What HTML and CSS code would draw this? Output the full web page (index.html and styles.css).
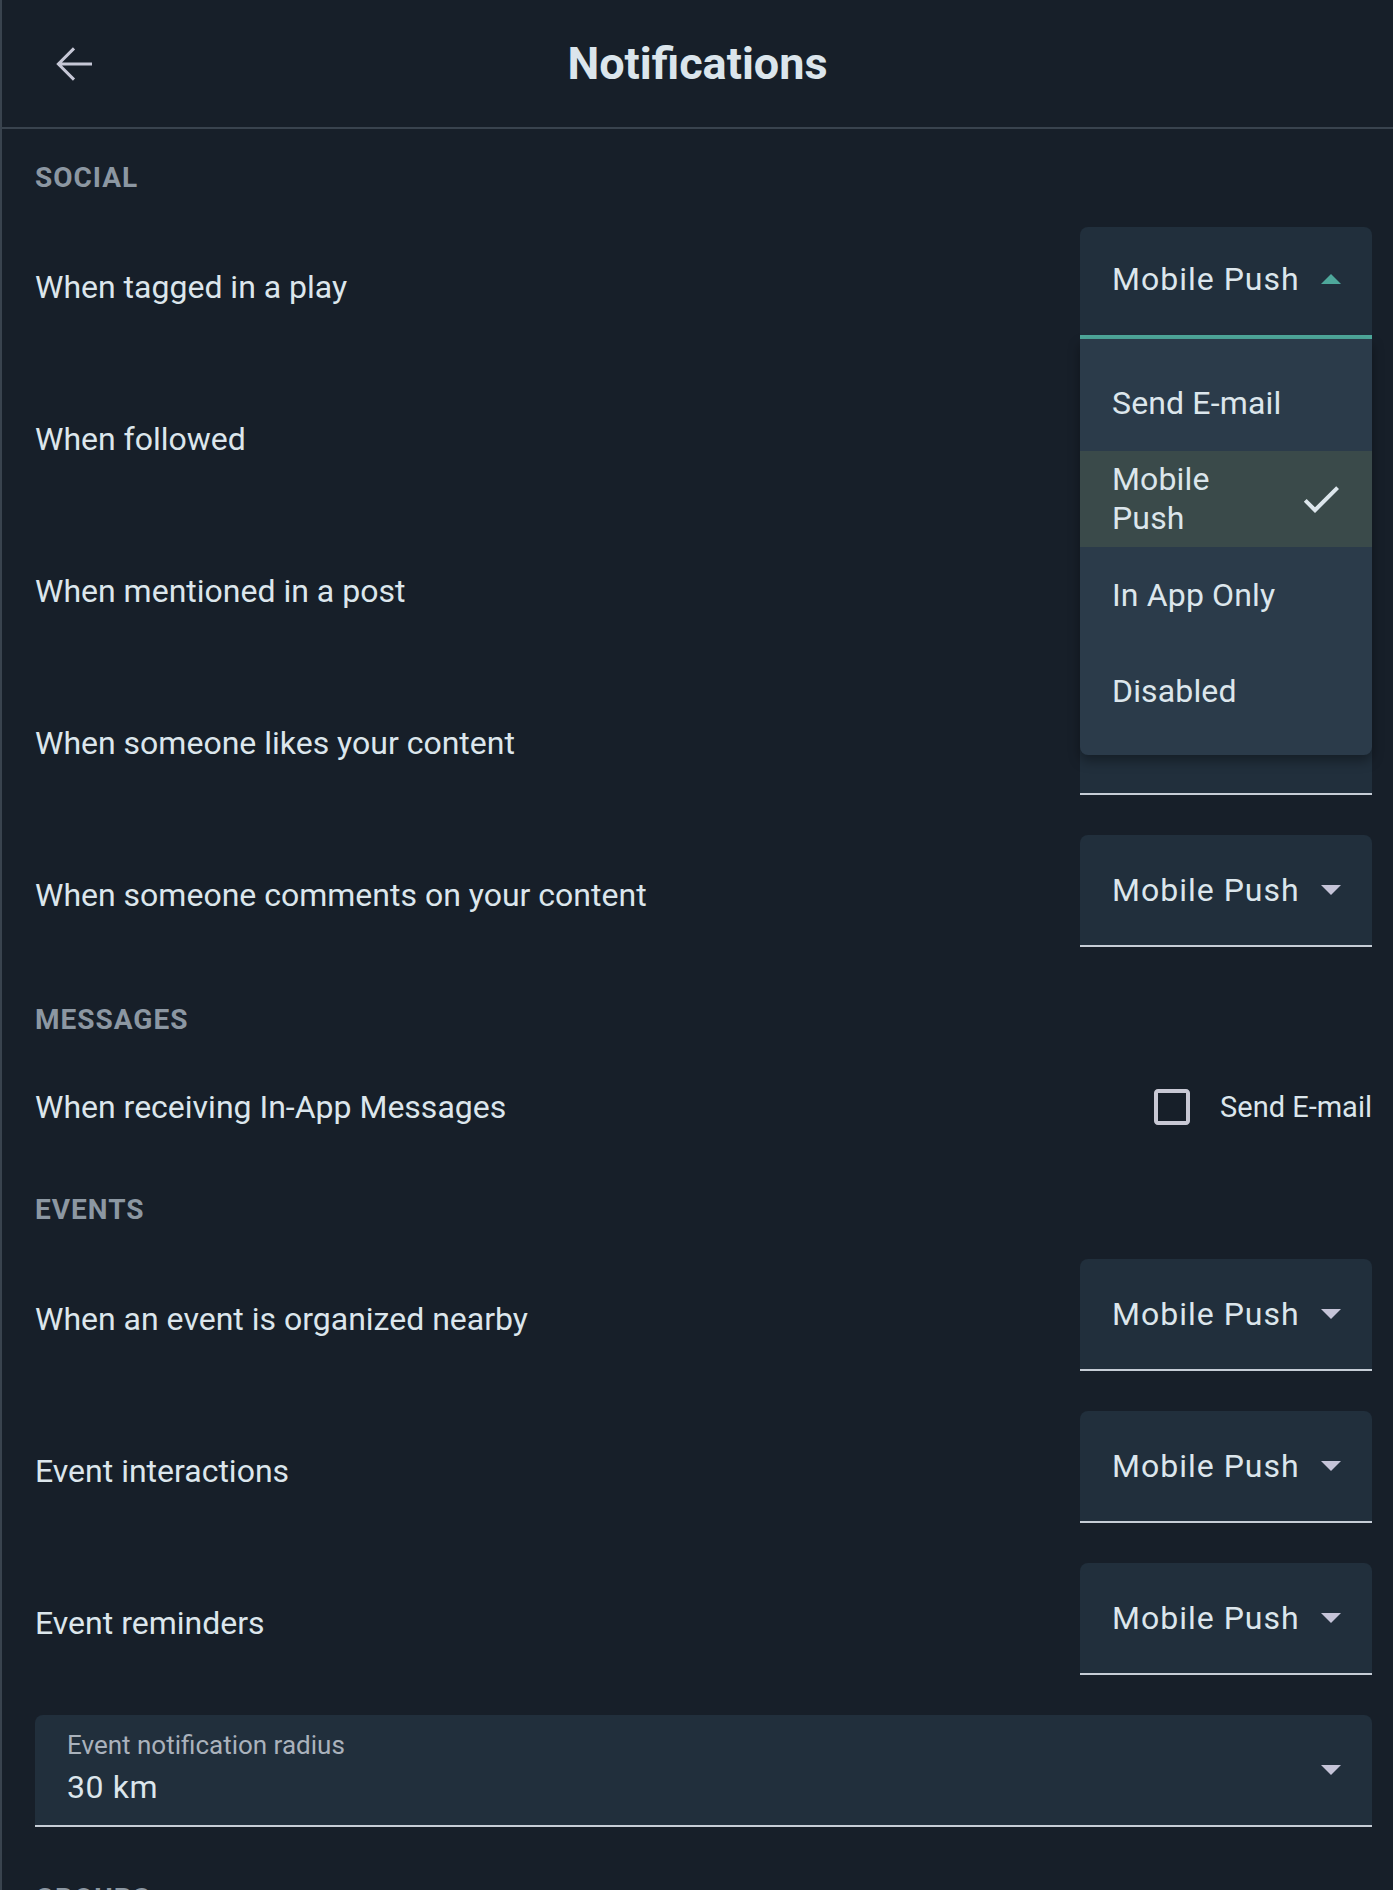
FILE: index.html
```html
<!DOCTYPE html>
<html lang="en">
<head>
    <meta charset="UTF-8">
    <meta name="viewport" content="width=device-width, initial-scale=1.0">
    <title>Notifications</title>

    <link rel="stylesheet" href="styles.css">

</head>
<body>

    <header class="topbar">
        <button class="back" aria-label="Back">
            <svg width="48" height="48" viewBox="0 0 24 24"><path d="M21 12H4.6M12 4.2 4.2 12l7.8 7.8" fill="none" stroke="currentColor" stroke-width="1.5"/></svg>
        </button>
        <h1 class="title">Notifications</h1>
        <span></span>
    </header>

    <main class="settings">

        <h2 class="group-title">Social</h2>

        <div class="row">
            <span class="row-label">When tagged in a play</span>
            <div class="select open">
                <span class="select-value">Mobile Push</span>
                <svg class="select-arrow" width="20" height="10" viewBox="0 0 20 10"><path d="M0 10h20L10 0z"/></svg>
                <ul class="menu">
                    <li class="menu-item">Send E-mail</li>
                    <li class="menu-item selected">
                        <span class="menu-text">Mobile Push</span>
                        <svg class="check" width="48" height="48" viewBox="0 0 24 24"><path d="M9 16.17 4.83 12l-1.42 1.41L9 19 21 7l-1.41-1.41z"/></svg>
                    </li>
                    <li class="menu-item">In App Only</li>
                    <li class="menu-item">Disabled</li>
                </ul>
            </div>
        </div>

        <div class="row">
            <span class="row-label">When followed</span>
            <div class="select">
                <span class="select-value">Mobile Push</span>
                <svg class="select-arrow" width="20" height="10" viewBox="0 0 20 10"><path d="M0 0h20L10 10z"/></svg>
            </div>
        </div>

        <div class="row">
            <span class="row-label">When mentioned in a post</span>
            <div class="select">
                <span class="select-value">Mobile Push</span>
                <svg class="select-arrow" width="20" height="10" viewBox="0 0 20 10"><path d="M0 0h20L10 10z"/></svg>
            </div>
        </div>

        <div class="row">
            <span class="row-label">When someone likes your content</span>
            <div class="select">
                <span class="select-value">Mobile Push</span>
                <svg class="select-arrow" width="20" height="10" viewBox="0 0 20 10"><path d="M0 0h20L10 10z"/></svg>
            </div>
        </div>

        <div class="row">
            <span class="row-label">When someone comments on your content</span>
            <div class="select">
                <span class="select-value">Mobile Push</span>
                <svg class="select-arrow" width="20" height="10" viewBox="0 0 20 10"><path d="M0 0h20L10 10z"/></svg>
            </div>
        </div>

        <h2 class="group-title">Messages</h2>

        <div class="row short">
            <span class="row-label">When receiving In-App Messages</span>
            <label class="checkbox">
                <svg width="48" height="48" viewBox="0 0 24 24"><path d="M19 5v14H5V5h14m0-2H5c-1.11 0-2 .9-2 2v14c0 1.1.89 2 2 2h14c1.1 0 2-.9 2-2V5c0-1.1-.9-2-2-2z"/></svg>
                <span>Send E-mail</span>
            </label>
        </div>

        <h2 class="group-title">Events</h2>

        <div class="row">
            <span class="row-label">When an event is organized nearby</span>
            <div class="select">
                <span class="select-value">Mobile Push</span>
                <svg class="select-arrow" width="20" height="10" viewBox="0 0 20 10"><path d="M0 0h20L10 10z"/></svg>
            </div>
        </div>

        <div class="row">
            <span class="row-label">Event interactions</span>
            <div class="select">
                <span class="select-value">Mobile Push</span>
                <svg class="select-arrow" width="20" height="10" viewBox="0 0 20 10"><path d="M0 0h20L10 10z"/></svg>
            </div>
        </div>

        <div class="row">
            <span class="row-label">Event reminders</span>
            <div class="select">
                <span class="select-value">Mobile Push</span>
                <svg class="select-arrow" width="20" height="10" viewBox="0 0 20 10"><path d="M0 0h20L10 10z"/></svg>
            </div>
        </div>

        <div class="field">
            <div class="field-body">
                <span class="field-label">Event notification radius</span>
                <span class="field-value">30 km</span>
            </div>
            <svg class="select-arrow" width="20" height="10" viewBox="0 0 20 10"><path d="M0 0h20L10 10z"/></svg>
        </div>

        <h2 class="group-title">Groups</h2>

        <div class="row">
            <span class="row-label">When invited to a group</span>
            <div class="select">
                <span class="select-value">Mobile Push</span>
                <svg class="select-arrow" width="20" height="10" viewBox="0 0 20 10"><path d="M0 0h20L10 10z"/></svg>
            </div>
        </div>

    </main>

</body>
</html>
```

FILE: styles.css
```css
body {
margin: 0;
min-height: 100vh;
background: #171f29;
border-left: 2px solid #39434e;
color: #dce6ec;
font-family: Roboto, "Noto Sans", sans-serif;
}

/* header */
.topbar {
height: 127px;
display: grid;
grid-template-columns: 1fr auto 1fr;
align-items: center;
border-bottom: 2px solid #39434e;
}

.back {
justify-self: start;
margin-left: 48px;
padding: 0;
border: 0;
background: none;
color: #c6c7d6;
display: flex;
}

.title {
margin: 0;
font-size: 45px;
font-weight: 700;
color: #dbe5ec;
}

/* content */
.settings {
padding: 0 21px 0 33px;
}

.group-title {
margin: 0;
padding: 32px 0 16px;
line-height: 34px;
font-size: 28px;
font-weight: 700;
letter-spacing: 1px;
text-transform: uppercase;
color: #8c97a2;
}

.row {
height: 152px;
display: flex;
align-items: center;
justify-content: space-between;
}

.row.short {
height: 108px;
}

.row-label {
font-size: 32px;
line-height: 1.5;
}

/* select */
.select {
position: relative;
box-sizing: border-box;
width: 292px;
height: 112px;
margin: 8px 0 16px;
padding: 0 31px 0 32px;
display: flex;
align-items: center;
background: #212f3c;
border-radius: 8px 8px 0 0;
border-bottom: 2px solid #c6cdd6;
}

.select-value {
flex: 1;
font-size: 32px;
letter-spacing: 1px;
}

.select-arrow {
fill: #c5c4d8;
}

.select.open {
border-bottom: 4px solid #4ea89b;
}

.select.open .select-value {
margin-bottom: 4px;
}

.select.open .select-arrow {
fill: #4ea89b;
margin-bottom: 4px;
}

.menu {
position: absolute;
top: calc(100% + 4px);
left: 0;
right: 0;
z-index: 5;
margin: 0;
padding: 16px 0;
list-style: none;
background: #2b3b4a;
border-radius: 0 0 8px 8px;
box-shadow: 0 6px 12px rgba(0, 0, 0, 0.35);
}

.menu-item {
box-sizing: border-box;
min-height: 96px;
padding: 0 27px 0 32px;
display: flex;
align-items: center;
font-size: 32px;
letter-spacing: 0.15px;
}

.menu-item.selected {
background: #3a4a4a;
}

.menu-text {
width: 130px;
line-height: 39px;
}

.check {
margin-left: auto;
fill: #dce6ec;
}

/* checkbox */
.checkbox {
display: flex;
align-items: center;
gap: 24px;
font-size: 29px;
}

.checkbox svg {
fill: #c8c8d4;
}

/* radius field */
.field {
box-sizing: border-box;
height: 112px;
margin: 16px 0 23px;
padding: 0 31px 0 32px;
display: flex;
align-items: center;
background: #212f3c;
border-radius: 8px 8px 0 0;
border-bottom: 2px solid #c6cdd6;
}

.field-body {
flex: 1;
display: flex;
flex-direction: column;
}

.field-label {
line-height: 30px;
font-size: 26px;
color: #aab2bc;
}

.field-value {
margin-top: 3px;
line-height: 48px;
font-size: 32px;
letter-spacing: 0.6px;
}
```
